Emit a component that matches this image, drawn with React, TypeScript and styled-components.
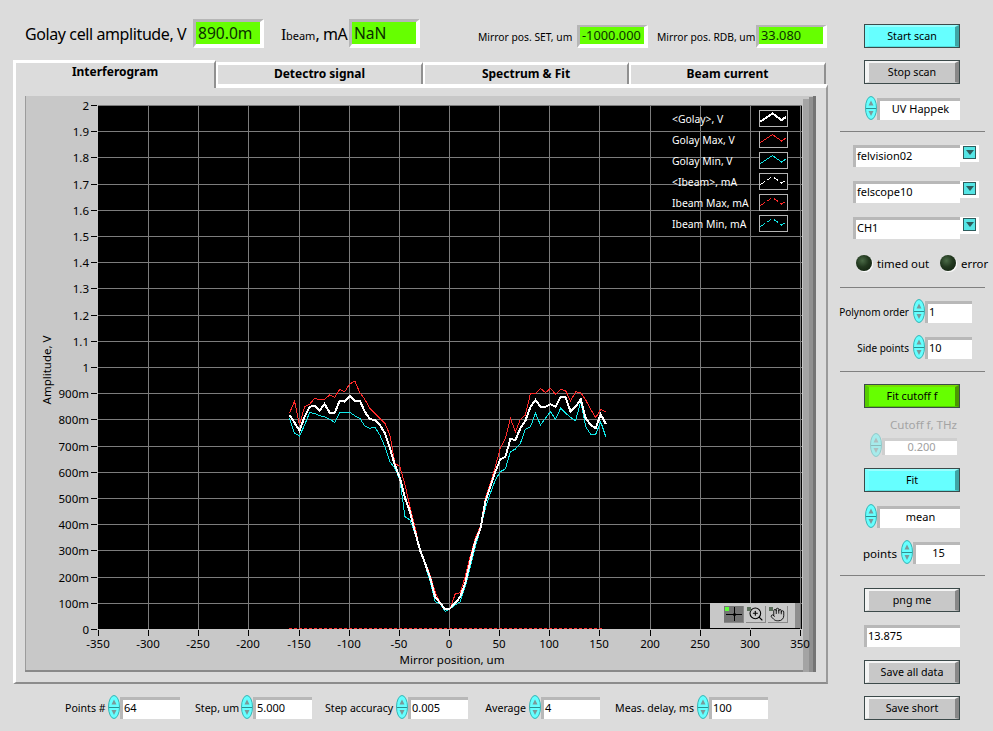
import React from 'react';
import styled, { createGlobalStyle } from 'styled-components';
import { Hand, ZoomIn } from 'lucide-react';

const FONT = '"Noto Sans", Tahoma, sans-serif';

// curves, y in px on the plot, one value per scan point (x = -160..155 um)
const GOLAY = [
	415, 422.7, 430.7, 416.7, 406.7, 406, 410.7, 404, 412.7, 412.7, 400.7, 401.7, 396, 400.7, 400.7, 411.7,
	419, 420, 425, 433.3, 448.3, 465, 478, 498, 511.7, 531.7, 550, 563, 578, 596.7, 603, 609.5,
	608.5, 603, 597, 583.3, 561.7, 541.7, 529.3, 501.7, 486.7, 471.7, 459.3, 456.7, 439, 440, 428.3, 420.7,
	406.7, 400, 406.7, 406.7, 404.3, 406.7, 396.7, 397.3, 411.7, 406.7, 399.3, 418.3, 425, 428.3, 414.3, 424,
];
const GOLAY_MAX = [
	413.3, 401, 425, 406.7, 404.3, 398.3, 400, 399.3, 395, 397.3, 389.3, 391.7, 384, 381, 392.7, 399.3,
	408.3, 413.3, 418.3, 423.3, 435, 463.3, 466.7, 485, 506.7, 526.7, 550, 561.7, 575, 591.7, 603, 608.7,
	608.7, 594, 592.7, 576.7, 556.7, 538.3, 526.7, 498.3, 483.3, 466.7, 448.3, 438.3, 418.3, 431.7, 419.3, 415,
	393.3, 393.3, 388.3, 392.7, 388.3, 394.3, 389.3, 390.7, 401, 391.7, 392.7, 400, 409.3, 417.7, 409.3, 411.7,
];
const GOLAY_MIN = [
	418.3, 433.3, 436, 425, 412.7, 413.3, 415.7, 416.7, 419.3, 422.3, 412.7, 412.3, 412.3, 415.7, 418.3, 426,
	428.3, 427.3, 435, 446.7, 461.7, 468.3, 480, 516.7, 520, 533.3, 550, 565, 581.7, 601.7, 604, 611.3,
	608.7, 605, 601.7, 586.7, 566.7, 546.7, 530, 508.3, 493.3, 480, 471.7, 469, 451.7, 449, 443.3, 429.3,
	426.7, 413.3, 425, 418.3, 411.7, 419.3, 408.3, 413.3, 417.3, 420.7, 401.7, 426.7, 434.3, 434.3, 421.7, 436.7,
];

const toPoints = (ys: number[]) => ys.map((y, i) => `${(289.5 + i * 5.02).toFixed(1)},${y}`).join(' ');

const X_LABELS = Array.from({ length: 15 }, (_, i) => -350 + i * 50);
const Y_LABELS = Array.from({ length: 21 }, (_, i) => {
	if (i === 0) return '0';
	if (i < 10) return `${i * 100}m`;
	return i % 10 === 0 ? String(i / 10) : (i / 10).toFixed(1);
});
const xPx = (i: number) => Math.round(98 + i * 50.14);
const yPx = (i: number) => 629 - Math.round(i * 26.2);

const GlobalStyle = createGlobalStyle`
	html, body {
		margin: 0;
		padding: 0;
		background: #dcdcdc;
	}
	body {
		font-family: ${FONT};
		color: #000;
	}
`;

const Page = styled.div`
	width: 993px;
	height: 731px;
	display: flex;
	overflow: hidden;
	background: #dcdcdc;
`;

const MainColumn = styled.div`
	flex: none;
	box-sizing: border-box;
	width: 840px;
	padding-left: 13px;
	display: flex;
	flex-direction: column;
`;

const TopBar = styled.div`
	height: 48px;
	padding-bottom: 12px;
	display: flex;
	align-items: flex-end;
`;

const ReadoutGroup = styled.div<{ $left: number }>`
	display: flex;
	align-items: center;
	margin-left: ${(p) => p.$left}px;
`;

const BigLabel = styled.span<{ $w: number }>`
	flex: none;
	width: ${(p) => p.$w}px;
	font-size: 16px;
	letter-spacing: -0.4px;
	white-space: nowrap;
`;

const SerifI = styled.span`
	font-family: "Liberation Serif", serif;
`;

const Sub = styled.span`
	font-size: 11px;
	letter-spacing: 0;
`;

const SmallLabel = styled.span<{ $w: number }>`
	flex: none;
	width: ${(p) => p.$w}px;
	font-size: 10.3px;
	white-space: nowrap;
`;

const Readout = styled.div<{ $big?: boolean; $w: number }>`
	flex: none;
	box-sizing: border-box;
	width: ${(p) => p.$w}px;
	height: ${(p) => (p.$big ? 29 : 23)}px;
	padding-left: 2px;
	border-style: solid;
	border-width: ${(p) => (p.$big ? '3px 4px 4px 3px' : '2px 4px 4px 3px')};
	border-color: #b6b6b6 #fff #fff #b6b6b6;
	background: #66ff00;
	color: #0a3000;
	font-size: ${(p) => (p.$big ? 15.6 : 12.8)}px;
	line-height: ${(p) => (p.$big ? 22 : 17)}px;
	white-space: nowrap;
`;

const TabRow = styled.div`
	height: 24px;
	display: flex;
	align-items: flex-end;
`;

const Tab = styled.div<{ $active?: boolean; $w: number }>`
	box-sizing: border-box;
	position: relative;
	z-index: ${(p) => (p.$active ? 1 : 0)};
	width: ${(p) => p.$w}px;
	height: ${(p) => (p.$active ? 28 : 22)}px;
	margin-bottom: ${(p) => (p.$active ? -4 : 0)}px;
	border-style: solid;
	border-width: 3px 2px 0 ${(p) => (p.$active ? 3 : 2)}px;
	border-color: #fff #909090 #fff #fff;
	background: #dcdcdc;
	font-size: 12px;
	font-weight: 700;
	line-height: ${(p) => (p.$active ? 18 : 17)}px;
	text-align: center;
`;

const TabPanel = styled.div`
	box-sizing: border-box;
	width: 815px;
	height: 600px;
	padding: 8px 0 0 9px;
	border-style: solid;
	border-width: 4px 2px 2px 3px;
	border-color: #fff #9a9a9a #8c8c8c #fff;
`;

const GraphBox = styled.div`
	position: relative;
	width: 791px;
	height: 576px;
	background: #c8c8c8;
`;

const GraphSvg = styled.svg`
	display: block;
	font-family: ${FONT};
	font-size: 11.5px;
`;

const Legend = styled.div`
	position: absolute;
	left: 647px;
	top: 14px;
	display: flex;
	flex-direction: column;
	gap: 4px;
`;

const LegendRow = styled.div`
	display: flex;
	align-items: center;
	justify-content: space-between;
	width: 116px;
	height: 17px;
	color: #fff;
	font-size: 10.4px;
	white-space: nowrap;
`;

const LegendSwatch = styled.svg`
	display: block;
	flex: none;
	box-sizing: border-box;
	width: 29px;
	height: 17px;
	border: 1px solid #b4b4b4;
	background: #000;
`;

const Palette = styled.div`
	position: absolute;
	left: 685px;
	top: 507px;
	box-sizing: border-box;
	width: 90px;
	height: 25px;
	padding: 3px 0 0 14px;
	display: flex;
	gap: 2px;
	background: #c8c8c8;
	border-right: 5px solid #8e8e8e;
`;

const PaletteButton = styled.div<{ $pressed?: boolean }>`
	position: relative;
	box-sizing: border-box;
	width: 20px;
	height: 17px;
	display: flex;
	align-items: center;
	justify-content: center;
	background: ${(p) => (p.$pressed ? '#747474' : '#c8c8c8')};
	border-right: 1px solid #8a8a8a;
	border-bottom: 1px solid #8a8a8a;
	color: #000;
`;

const PaletteMark = styled.span<{ $on?: boolean }>`
	position: absolute;
	left: 1px;
	top: 1px;
	width: 4px;
	height: 4px;
	background: ${(p) => (p.$on ? '#5eff3a' : '#5a6e5a')};
`;

const BottomRow = styled.div`
	display: flex;
	align-items: flex-start;
	margin-top: 13px;
`;

const BottomGroup = styled.div<{ $left: number }>`
	display: flex;
	align-items: center;
	margin-left: ${(p) => p.$left}px;
`;

const FieldLabel = styled.span<{ $w: number }>`
	flex: none;
	width: ${(p) => p.$w}px;
	padding-right: 3px;
	box-sizing: border-box;
	font-size: 10.6px;
	text-align: right;
	white-space: nowrap;
`;

const Field = styled.div<{ $w: number; $h?: number; $center?: boolean; $dim?: boolean }>`
	flex: none;
	box-sizing: border-box;
	width: ${(p) => p.$w}px;
	height: ${(p) => p.$h ?? 22}px;
	padding: 0 0 0 1px;
	border-style: solid;
	border-width: 3px 0 0 3px;
	border-color: ${(p) => (p.$dim ? '#cfcfcf' : '#b8b8b8')} #fff #fff ${(p) => (p.$dim ? '#cfcfcf' : '#b8b8b8')};
	background: #fff;
	color: ${(p) => (p.$dim ? '#a0a0a0' : '#000')};
	font-size: 11px;
	line-height: ${(p) => (p.$h ?? 22) - 6}px;
	text-align: ${(p) => (p.$center ? 'center' : 'left')};
	white-space: nowrap;
`;

const SpinnerSvg = styled.svg<{ $dim?: boolean }>`
	display: block;
	flex: none;
	position: relative;
	z-index: 1;
	margin-top: -2px;
	opacity: ${(p) => (p.$dim ? 0.45 : 1)};
`;

const Sidebar = styled.div`
	flex: none;
	width: 145px;
	padding-top: 24px;
	display: flex;
	flex-direction: column;
`;

const Spaced = styled.div<{ $top: number; $right?: number }>`
	display: flex;
	align-items: center;
	justify-content: flex-end;
	margin-top: ${(p) => p.$top}px;
	padding-right: ${(p) => p.$right ?? 25}px;
`;

const Separator = styled.div<{ $top: number }>`
	flex: none;
	height: 1px;
	margin-top: ${(p) => p.$top}px;
	background: #808080;
`;

const Button = styled.div<{ $tone: 'gray' | 'cyan' | 'green' }>`
	box-sizing: border-box;
	width: 96px;
	height: 24px;
	border: 1px solid #3c4a4a;
	background: ${(p) => ({ gray: '#c8c8c8', cyan: '#66ffff', green: '#66ff00' }[p.$tone])};
`;

const ButtonFace = styled.div<{ $tone: 'gray' | 'cyan' | 'green' }>`
	box-sizing: border-box;
	height: 22px;
	border-style: solid;
	border-width: 2px 4px 1px 4px;
	border-color: ${(p) =>
		({
			gray: '#f4f4f4 #888 #c8c8c8 #f4f4f4',
			cyan: '#99ffff #3fa5a5 #55dddd #77ffff',
			green: '#77dd00 #4a9a00 #55cc00 #55cc00',
		}[p.$tone])};
	font-size: 10.7px;
	line-height: 18px;
	text-align: center;
	white-space: nowrap;
`;

const DropButton = styled.div`
	box-sizing: border-box;
	flex: none;
	width: 19px;
	height: 17px;
	align-self: flex-start;
	padding: 1px 3px 3px 3px;
	background: #fff;
`;

const DropFace = styled.div`
	box-sizing: border-box;
	width: 13px;
	height: 13px;
	display: flex;
	justify-content: center;
	padding-top: 3px;
	background: #55e5e5;
	border: 1px solid #2e5c5c;
`;

const DropArrow = styled.div`
	width: 0;
	height: 0;
	border-style: solid;
	border-width: 5px 4px 0 4px;
	border-color: #2e5c5c transparent transparent transparent;
`;

const LedRow = styled.div`
	display: flex;
	align-items: center;
	margin-top: 16px;
	height: 16px;
	padding-left: 16px;
`;

const Led = styled.div`
	flex: none;
	box-sizing: border-box;
	width: 16px;
	height: 16px;
	border-radius: 50%;
	background: radial-gradient(circle at 40% 35%, #4a6a46 0%, #22381f 45%, #0e1c0c 100%);
	box-shadow: 1px 1px 1px #fff;
`;

const LedLabel = styled.span<{ $w: number }>`
	flex: none;
	width: ${(p) => p.$w}px;
	padding-left: 5px;
	box-sizing: border-box;
	font-size: 11.4px;
	white-space: nowrap;
`;

const SideLabel = styled.span<{ $size?: number; $dim?: boolean }>`
	flex: none;
	padding-right: 4px;
	font-size: ${(p) => p.$size ?? 10}px;
	line-height: 17px;
	color: ${(p) => (p.$dim ? '#a4a4a4' : '#000')};
	white-space: nowrap;
`;

const Spinner: React.FC<{ dim?: boolean }> = ({ dim }) => (
	<SpinnerSvg $dim={dim} width="12" height="24" viewBox="0 0 12 24">
		<ellipse cx="6" cy="12" rx="5.5" ry="11.5" fill="#66ffff" stroke="#36b4b4" />
		<path d="M1 12.5h10" stroke="#2f8f8f" />
		<path d="M6 4.5l2.5 5h-5z" fill="#7a9a9a" />
		<path d="M6 20l2.5-5h-5z" fill="#7a9a9a" />
	</SpinnerSvg>
);

const ActionButton: React.FC<{ tone?: 'gray' | 'cyan' | 'green'; children: React.ReactNode }> = ({ tone = 'gray', children }) => (
	<Button $tone={tone}>
		<ButtonFace $tone={tone}>{children}</ButtonFace>
	</Button>
);

const Dropdown: React.FC<{ top: number; value: string }> = ({ top, value }) => (
	<Spaced $top={top} $right={6}>
		<Field $w={107}>{value}</Field>
		<DropButton>
			<DropFace>
				<DropArrow />
			</DropFace>
		</DropButton>
	</Spaced>
);

const LEGEND = [
	{ label: '<Golay>, V', color: '#fff', width: 2, dash: undefined },
	{ label: 'Golay Max, V', color: '#ff2a2a', width: 1, dash: undefined },
	{ label: 'Golay Min, V', color: '#10e8e8', width: 1, dash: undefined },
	{ label: '<Ibeam>, mA', color: '#fff', width: 1, dash: '5 3' },
	{ label: 'Ibeam Max, mA', color: '#ff2a2a', width: 1, dash: '5 3' },
	{ label: 'Ibeam Min, mA', color: '#10e8e8', width: 1, dash: '5 3' },
];

const BOTTOM_FIELDS = [
	{ label: 'Points #', left: 52, w: 43, value: '64', field: 60 },
	{ label: 'Step, um', left: 15, w: 46, value: '5.000', field: 59 },
	{ label: 'Step accuracy', left: 13, w: 71, value: '0.005', field: 60 },
	{ label: 'Average', left: 17, w: 44, value: '4', field: 59 },
	{ label: 'Meas. delay, ms', left: 15, w: 82, value: '100', field: 59 },
];

const Graph: React.FC = () => (
	<GraphBox>
		<GraphSvg width="791" height="576" viewBox="25 96 791 576">
			<rect x="25" y="96" width="1" height="576" fill="#9c9c9c" />
			<rect x="25" y="670" width="791" height="2" fill="#8a8a8a" />
			<rect x="803" y="99" width="6" height="573" fill="#a4a4a4" />
			<rect x="809" y="97" width="4" height="575" fill="#909090" />
			<rect x="813" y="96" width="3" height="576" fill="#747474" />
			<rect x="98" y="105" width="704" height="524" fill="#000" />
			<g shapeRendering="crispEdges" stroke="#7c7c7c">
				{X_LABELS.slice(1).map((_, i) => (
					<line key={i} x1={xPx(i + 1) + 0.5} x2={xPx(i + 1) + 0.5} y1="105" y2="629" />
				))}
				{Y_LABELS.slice(1).map((_, i) => (
					<line key={i} x1="98" x2="802" y1={yPx(i + 1) + 0.5} y2={yPx(i + 1) + 0.5} />
				))}
			</g>
			<g shapeRendering="crispEdges" stroke="#000">
				{X_LABELS.map((_, i) => (
					<line key={i} x1={xPx(i) + 0.5} x2={xPx(i) + 0.5} y1="630" y2="636" />
				))}
				{Y_LABELS.map((_, i) => (
					<line key={i} x1="91" x2="97" y1={yPx(i) + 0.5} y2={yPx(i) + 0.5} />
				))}
			</g>
			{Y_LABELS.map((t, i) => (
				<text key={t} x="89" y={yPx(i) + 4.5} textAnchor="end">
					{t}
				</text>
			))}
			{X_LABELS.map((t, i) => (
				<text key={t} x={xPx(i)} y="648" textAnchor="middle">
					{t}
				</text>
			))}
			<text x="452" y="664" textAnchor="middle">
				Mirror position, um
			</text>
			<text x="51" y="370" textAnchor="middle" transform="rotate(-90 51 370)">
				Amplitude, V
			</text>
			<g fill="none" shapeRendering="crispEdges">
				<line x1="289" x2="604" y1="628.5" y2="628.5" stroke="#ff3030" strokeDasharray="3 2" />
				<polyline points={toPoints(GOLAY_MAX)} stroke="#ff2a2a" />
				<polyline points={toPoints(GOLAY_MIN)} stroke="#10e8e8" />
				<polyline points={toPoints(GOLAY)} stroke="#fff" strokeWidth="2" />
			</g>
		</GraphSvg>
		<Legend>
			{LEGEND.map((row) => (
				<LegendRow key={row.label}>
					{row.label}
					<LegendSwatch viewBox="0 0 27 15">
						<polyline
							points="0.5,10.5 12.5,2.5 21.5,9 26,6"
							fill="none"
							stroke={row.color}
							strokeWidth={row.width}
							strokeDasharray={row.dash}
							shapeRendering="crispEdges"
						/>
					</LegendSwatch>
				</LegendRow>
			))}
		</Legend>
		<Palette>
			<PaletteButton $pressed>
				<PaletteMark $on />
				<svg width="16" height="14" viewBox="0 0 16 14">
					<path d="M0 7.5h16M8.5 0v14" stroke="#000" />
					<circle cx="8.5" cy="7.5" r="1.5" fill="#000" />
				</svg>
			</PaletteButton>
			<PaletteButton>
				<PaletteMark />
				<ZoomIn size={16} strokeWidth={1.6} />
			</PaletteButton>
			<PaletteButton>
				<PaletteMark />
				<Hand size={15} strokeWidth={1.4} />
			</PaletteButton>
		</Palette>
	</GraphBox>
);

export default function App() {
	return (
		<Page>
			<GlobalStyle />
			<MainColumn>
				<TopBar>
					<ReadoutGroup $left={12}>
						<BigLabel $w={168}>Golay cell amplitude, V</BigLabel>
						<Readout $big $w={71}>890.0m</Readout>
					</ReadoutGroup>
					<ReadoutGroup $left={17}>
						<BigLabel $w={68}>
							<SerifI>I</SerifI>
							<Sub>beam</Sub>, mA
						</BigLabel>
						<Readout $big $w={71}>NaN</Readout>
					</ReadoutGroup>
					<ReadoutGroup $left={58}>
						<SmallLabel $w={99}>Mirror pos. SET, um</SmallLabel>
						<Readout $w={71}>-1000.000</Readout>
					</ReadoutGroup>
					<ReadoutGroup $left={9}>
						<SmallLabel $w={99}>Mirror pos. RDB, um</SmallLabel>
						<Readout $w={71}>33.080</Readout>
					</ReadoutGroup>
				</TopBar>
				<TabRow>
					<Tab $active $w={203}>Interferogram</Tab>
					<Tab $w={207}>Detectro signal</Tab>
					<Tab $w={206}>Spectrum &amp; Fit</Tab>
					<Tab $w={197}>Beam current</Tab>
				</TabRow>
				<TabPanel>
					<Graph />
				</TabPanel>
				<BottomRow>
					{BOTTOM_FIELDS.map((f) => (
						<BottomGroup key={f.label} $left={f.left}>
							<FieldLabel $w={f.w}>{f.label}</FieldLabel>
							<Spinner />
							<Field $w={f.field}>{f.value}</Field>
						</BottomGroup>
					))}
				</BottomRow>
			</MainColumn>
			<Sidebar>
				<Spaced $top={0}><ActionButton tone="cyan">Start scan</ActionButton></Spaced>
				<Spaced $top={12}><ActionButton>Stop scan</ActionButton></Spaced>
				<Spaced $top={14}>
					<Spinner />
					<Field $w={83} $center>UV Happek</Field>
				</Spaced>
				<Separator $top={11} />
				<Dropdown top={13} value="felvision02" />
				<Dropdown top={14} value="felscope10" />
				<Dropdown top={14} value="CH1" />
				<LedRow>
					<Led />
					<LedLabel $w={68}>timed out</LedLabel>
					<Led />
					<LedLabel $w={29}>error</LedLabel>
				</LedRow>
				<Separator $top={16} />
				<Spaced $top={13} $right={13}>
					<SideLabel>Polynom order</SideLabel>
					<Spinner />
					<Field $w={47}>1</Field>
				</Spaced>
				<Spaced $top={14} $right={13}>
					<SideLabel>Side points</SideLabel>
					<Spinner />
					<Field $w={47}>10</Field>
				</Spaced>
				<Separator $top={12} />
				<Spaced $top={12}><ActionButton tone="green">Fit cutoff f</ActionButton></Spaced>
				<Spaced $top={8} $right={24}><SideLabel $dim $size={11.6}>Cutoff f, THz</SideLabel></Spaced>
				<Spaced $top={2} $right={28}>
					<Spinner dim />
					<Field $w={75} $h={17} $center $dim>0.200</Field>
				</Spaced>
				<Spaced $top={11}><ActionButton tone="cyan">Fit</ActionButton></Spaced>
				<Spaced $top={14}>
					<Spinner />
					<Field $w={83} $center>mean</Field>
				</Spaced>
				<Spaced $top={14}>
					<SideLabel $size={11.6}>points</SideLabel>
					<Spinner />
					<Field $w={47} $center>15</Field>
				</Spaced>
				<Separator $top={11} />
				<Spaced $top={12}><ActionButton>png me</ActionButton></Spaced>
				<Spaced $top={13}><Field $w={96}>13.875</Field></Spaced>
				<Spaced $top={13}><ActionButton>Save all data</ActionButton></Spaced>
				<Spaced $top={12}><ActionButton>Save short</ActionButton></Spaced>
			</Sidebar>
		</Page>
	);
}
